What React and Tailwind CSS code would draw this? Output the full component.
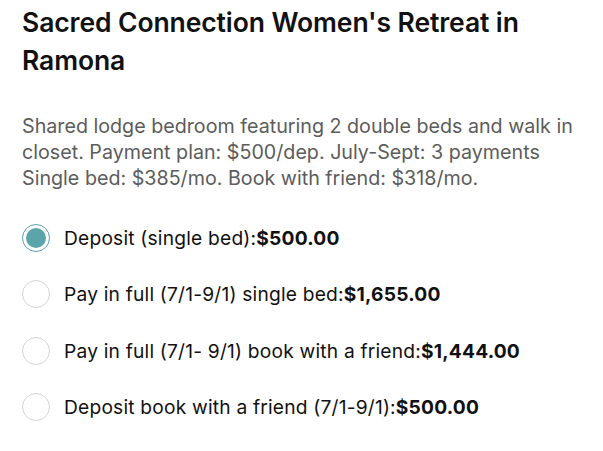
import React, { useState } from 'react';

const options = [
    { label: 'Deposit (single bed):', price: '$500.00' },
    { label: 'Pay in full (7/1-9/1) single bed:', price: '$1,655.00' },
    { label: 'Pay in full (7/1- 9/1) book with a friend:', price: '$1,444.00' },
    { label: 'Deposit book with a friend (7/1-9/1):', price: '$500.00' },
];

const App = () => {
    const [selected, setSelected] = useState(0);

    return (
        <div className="min-h-screen bg-white px-[22px] pt-[3px] text-[#111111]" style={{ fontFamily: 'Inter, "Liberation Sans", sans-serif' }}>
            <h1 className="w-[540px] text-[26.5px] font-semibold leading-[38px] tracking-[-0.1px]">
                Sacred Connection Women's Retreat in Ramona
            </h1>

            <p className="mt-[34px] whitespace-nowrap text-[19.7px] leading-[26px] text-[#5c5c5c]">
                Shared lodge bedroom featuring 2 double beds and walk in
                <br />
                closet. Payment plan: $500/dep. July-Sept: 3 payments
                <br />
                Single bed: $385/mo. Book with friend: $318/mo.
            </p>

            <div className="mt-[33px] flex flex-col gap-[28.3px]">
                {options.map((opt, index) => (
                    <label key={index} className="flex cursor-pointer items-center gap-[14px]" onClick={() => setSelected(index)}>
                        <span
                            className={
                                selected === index
                                    ? 'flex h-[28px] w-[28px] shrink-0 items-center justify-center rounded-full border-[1.5px] border-[#5ba4a9] bg-white'
                                    : 'flex h-[28px] w-[28px] shrink-0 items-center justify-center rounded-full border border-[#d4d4d4] bg-white'
                            }
                        >
                            {selected === index && <span className="h-[20px] w-[20px] rounded-full bg-[#5ba4a9]" />}
                        </span>
                        <span className="text-[19.2px] leading-[28px] tracking-[0.2px]">
                            {opt.label}
                            <span className="font-bold">{opt.price}</span>
                        </span>
                    </label>
                ))}
            </div>
        </div>
    );
};

export default App;
